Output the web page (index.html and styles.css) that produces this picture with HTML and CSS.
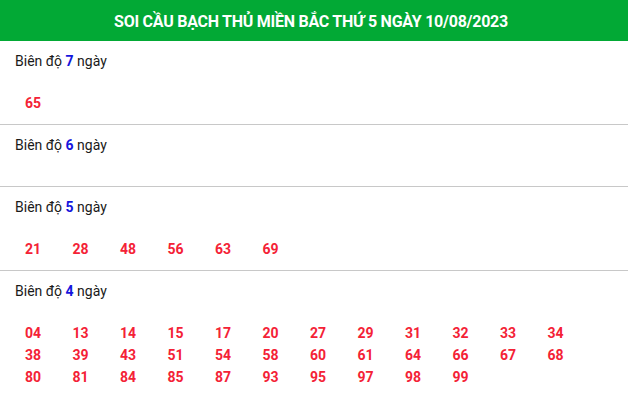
FILE: index.html
```html
<!DOCTYPE html>
<html>
<head>
<meta charset="utf-8">
<link rel="stylesheet" href="styles.css">
</head>
<body>
<div class="box">
  <div class="head">SOI CẦU BẠCH THỦ MIỀN BẮC THỨ 5 NGÀY 10/08/2023</div>
  <div class="sec">
    <div class="lbl">Biên độ <b>7</b> ngày</div>
    <div class="nums"><span>65</span></div>
  </div>
  <div class="sec">
    <div class="lbl">Biên độ <b>6</b> ngày</div>
    <div class="nums"></div>
  </div>
  <div class="sec">
    <div class="lbl">Biên độ <b>5</b> ngày</div>
    <div class="nums"><span>21</span><span>28</span><span>48</span><span>56</span><span>63</span><span>69</span></div>
  </div>
  <div class="sec">
    <div class="lbl">Biên độ <b>4</b> ngày</div>
    <div class="nums"><span>04</span><span>13</span><span>14</span><span>15</span><span>17</span><span>20</span><span>27</span><span>29</span><span>31</span><span>32</span><span>33</span><span>34</span><span>38</span><span>39</span><span>43</span><span>51</span><span>54</span><span>58</span><span>60</span><span>61</span><span>64</span><span>66</span><span>67</span><span>68</span><span>80</span><span>81</span><span>84</span><span>85</span><span>87</span><span>93</span><span>95</span><span>97</span><span>98</span><span>99</span></div>
  </div>
</div>
</body>
</html>
```

FILE: styles.css
```css
html, body {
  margin: 0;
  padding: 0;
  background: #fff;
}
body {
  font-family: Roboto, "Liberation Sans", sans-serif;
}
.head {
  height: 41px;
  background: #02a935;
  color: #fff;
  font-weight: 700;
  font-size: 16px;
  letter-spacing: -0.25px;
  display: flex;
  align-items: center;
  justify-content: center;
  padding: 1px 6px 0 0;
  box-sizing: border-box;
}
.sec {
  padding: 10px 15px 10px;
  border-bottom: 1px solid #c8c8c8;
}
.lbl {
  font-size: 14px;
  line-height: 20px;
  color: #1a1a1a;
}
.lbl b {
  color: #1515dd;
  font-weight: 700;
}
.nums {
  margin-top: 21px;
  padding-left: 10px;
  display: grid;
  grid-template-columns: repeat(12, 47.5px);
}
.nums span {
  font-size: 14px;
  font-weight: 700;
  line-height: 22px;
  color: #f42236;
}
```
